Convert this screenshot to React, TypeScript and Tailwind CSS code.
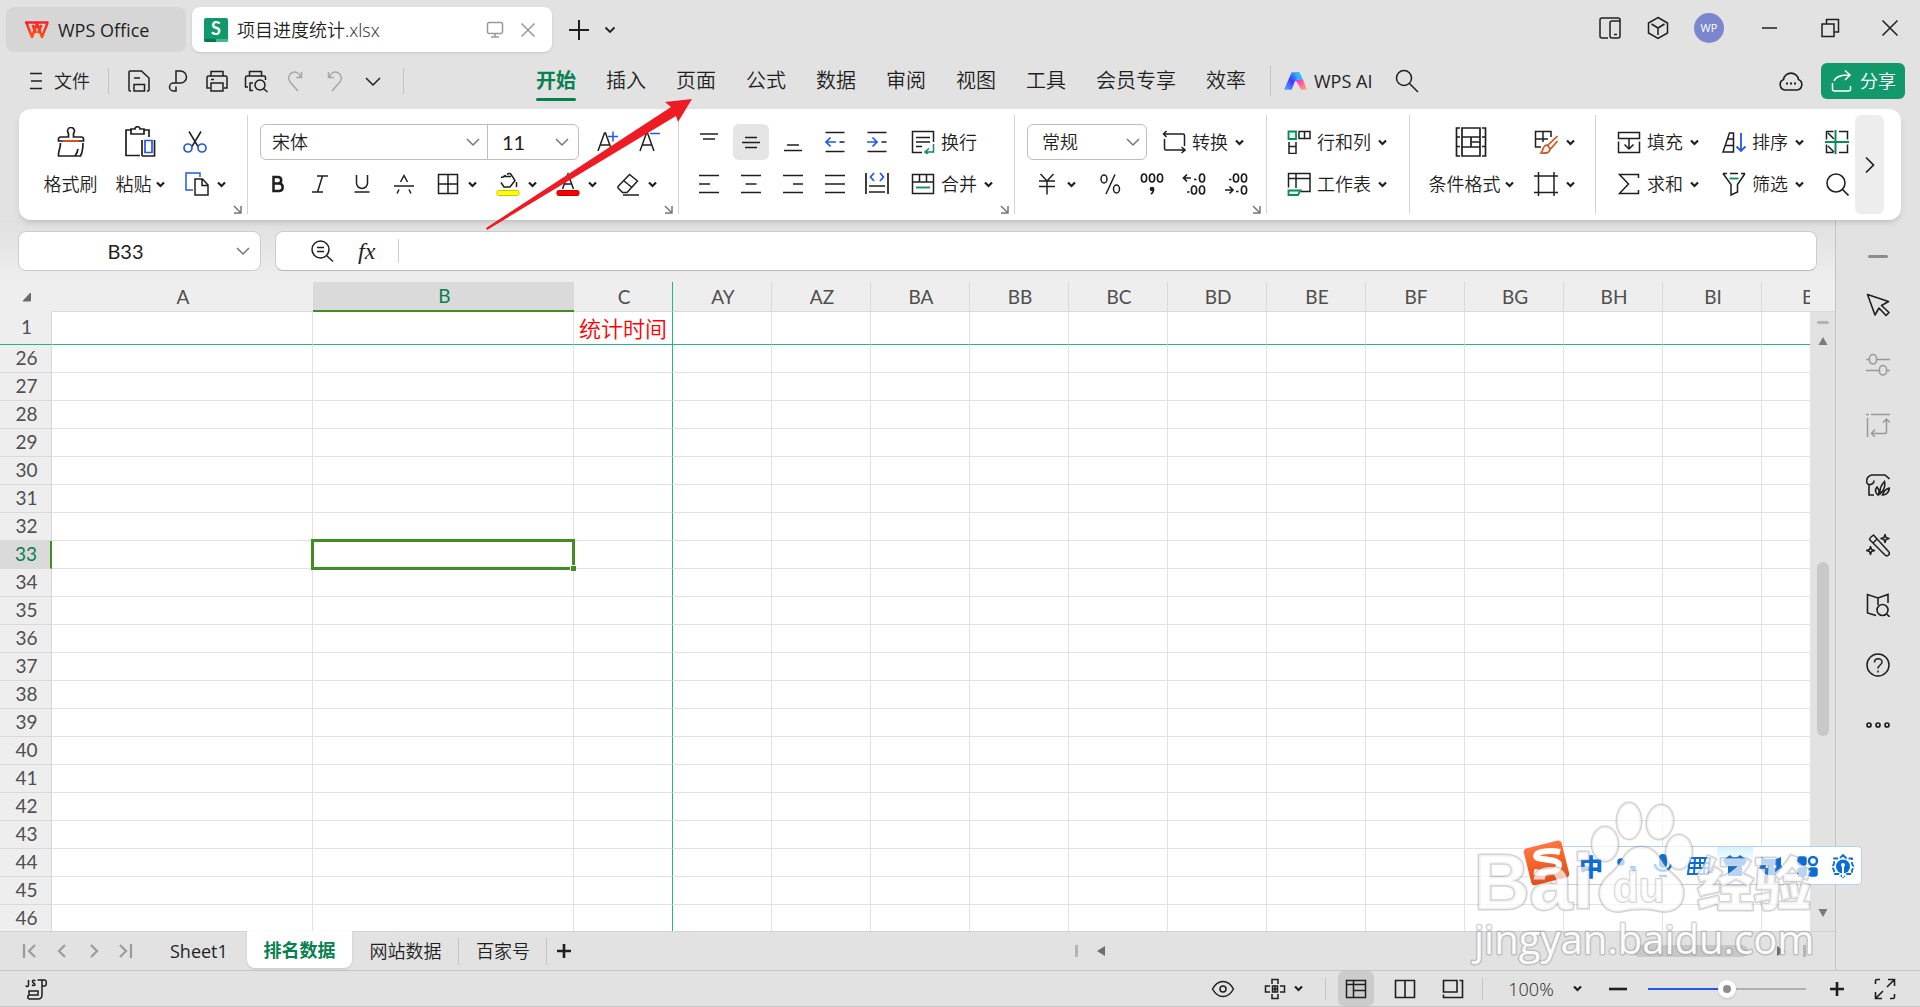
import { useState } from "react"
import type { ReactNode } from "react"

const menus = ["开始", "插入", "页面", "公式", "数据", "审阅", "视图", "工具", "会员专享", "效率"]
const farCols = ["AY", "AZ", "BA", "BB", "BC", "BD", "BE", "BF", "BG", "BH", "BI", "BJ"]
const rows = Array.from({ length: 21 }, (_, i) => i + 26)
const sheets = ["Sheet1", "排名数据", "网站数据", "百家号"]

const BLUE = "#2457e6"
const GREEN = "#0c8a5c"
const ORANGE = "#d0541b"

type IconProps = { children: ReactNode; w?: number; h?: number; sw?: number; className?: string }

const Icon = ({ children, w = 24, h = 24, sw = 1.5, className = "" }: IconProps) => (
  <svg width={w} height={h} viewBox={`0 0 ${w} ${h}`} fill="none" stroke="currentColor" strokeWidth={sw} className={`shrink-0 ${className}`} aria-hidden="true">
    {children}
  </svg>
)

const Chevron = () => (
  <Icon w={9} h={9} sw={2.2}><path d="M1 2.5l3.5 3.5L8 2.5" /></Icon>
)

const ThinChevron = ({ className = "" }: { className?: string }) => (
  <Icon w={14} h={10} sw={1.5} className={`text-[#777777] ${className}`}><path d="M1 2l6 6 6-6" /></Icon>
)

const IconBtn = ({ label, children, active }: { label: string; children: ReactNode; active?: boolean }) => (
  <button aria-label={label} className="flex h-9 w-[42px] shrink-0 items-center justify-center">
    <span className={`flex h-9 w-9 items-center justify-center rounded-md ${active ? "bg-[#e5e5e5]" : ""}`}>{children}</span>
  </button>
)

const SplitBtn = ({ label, children }: { label: string; children: ReactNode }) => (
  <button aria-label={label} className="flex h-9 w-[60px] shrink-0 items-center gap-2 pl-[11px]">
    {children}
    <Chevron />
  </button>
)

const TextBtn = ({ label, children, menu }: { label: string; children: ReactNode; menu?: boolean }) => (
  <button className="flex h-9 shrink-0 items-center gap-1.5 whitespace-nowrap pl-[11px] pr-2 text-lg">
    {children}
    <span className="flex items-center gap-[7px]">{label}{menu && <Chevron />}</span>
  </button>
)

const BigBtn = ({ label, children, menu, width }: { label: string; children: ReactNode; menu?: boolean; width: string }) => (
  <button className={`flex shrink-0 flex-col items-center gap-1.5 whitespace-nowrap text-lg ${width}`}>
    <span className="flex h-9 items-center">{children}</span>
    <span className="flex h-9 items-center gap-1">{label}{menu && <Chevron />}</span>
  </button>
)

const Group = ({ children, className = "", more }: { children: ReactNode; className?: string; more?: boolean }) => (
  <div className={`relative flex h-[99px] shrink-0 border-r border-[#d4d4d4] pt-[9px] ${className}`}>
    {children}
    {more && (
      <button aria-label="更多设置" className="absolute bottom-0 right-[5px] text-[#777777]">
        <Icon w={9} h={9}><path d="M1 1l7 7M8 1v7H1" /></Icon>
      </button>
    )}
  </div>
)

const Lines = ({ d, accent }: { d: string; accent?: string }) => (
  <Icon><path d={d} strokeWidth="1.7" />{accent && <path d={accent} stroke={BLUE} strokeWidth="1.7" />}</Icon>
)

const TitleBar = () => (
  <header className="flex h-14 items-center">
    <div className="flex h-full flex-1 items-start pl-1.5 pt-[7px]">
      <button className="flex h-[45px] w-[180px] shrink-0 items-center gap-2 rounded-lg bg-[#d6d6d6] pl-[18px] text-lg font-normal">
        <svg width="26" height="18" viewBox="0 0 26 18" fill="none" aria-hidden="true">
          <defs>
            <linearGradient id="wps" gradientUnits="userSpaceOnUse" x1="0" y1="0" x2="0" y2="18">
              <stop offset="0" stopColor="#f5202d" />
              <stop offset="1" stopColor="#ff5a12" />
            </linearGradient>
          </defs>
          <path d="M1 1.5H24.5M2.500 2l5.500 14 5-13.500 5 13.500 5.500-14M8.500 4l3.500 8M17.500 4l-3.500 8" stroke="url(#wps)" strokeWidth="2.600" strokeLinejoin="round" />
        </svg>
        WPS Office
      </button>
      <div className="ml-1.5 flex h-[45px] w-[360px] shrink-0 items-center rounded-lg bg-white pl-3 pr-4 text-lg shadow">
        <svg width="24" height="24" viewBox="0 0 24 24" aria-hidden="true">
          <rect width="24" height="24" rx="2" fill="#12996b" />
          <path d="M0 21h12v3H2a2 2 0 0 1-2-2z" fill="#04774c" />
          <path d="M12 21h12v1a2 2 0 0 1-2 2H12z" fill="#45b88b" />
          <text x="12" y="17" textAnchor="middle" fontFamily="Lato" fontWeight="700" fontSize="18" fill="#fff">S</text>
        </svg>
        <span className="ml-[9px] flex-1">项目进度统计.xlsx</span>
        <Icon w={18} h={18} className="text-[#999999]"><path d="M3 1.500h12a1.500 1.500 0 0 1 1.500 1.500v8a1.500 1.500 0 0 1-1.500 1.500H3A1.500 1.500 0 0 1 1.500 11V3A1.500 1.500 0 0 1 3 1.500zM9 12.500v3M5 16h8" /></Icon>
        <button aria-label="关闭标签" className="ml-4 text-[#999999]"><Icon w={16} h={16}><path d="M1.500 1.500l13 13M14.500 1.500l-13 13" /></Icon></button>
      </div>
      <button aria-label="新建" className="ml-4 flex h-[45px] items-center"><Icon w={22} h={22} sw={2}><path d="M1 11h20M11 1v20" /></Icon></button>
      <button aria-label="标签列表" className="ml-3.5 flex h-[45px] items-center"><Icon w={12} h={10} sw={1.8}><path d="M1.500 2.500L6 7l4.500-4.500" /></Icon></button>
    </div>
    <button aria-label="手机" className="ml-4"><Icon><path d="M10 22H4a2 2 0 0 1-2-2V4a2 2 0 0 1 2-2h16a2 2 0 0 1 2 2v16a2 2 0 0 1-2 2h-6a2 2 0 0 1-2-2V7a2 2 0 0 1 2-2h8M16 18.500h3" /></Icon></button>
    <button aria-label="应用" className="ml-6"><Icon><path d="M12 1.500l9.500 5.500v10L12 22.500 2.500 17V7zM5.500 8L12 12l6.500-4M12 12v7" /></Icon></button>
    <button className="ml-6 h-[30px] w-[30px] rounded-full bg-[#7b86cc] text-[11px] font-normal text-white">WP</button>
    <button aria-label="最小化" className="ml-9"><Icon w={20} h={20}><path d="M2 10h15" /></Icon></button>
    <button aria-label="还原" className="ml-[39px]"><Icon w={22} h={22}><path d="M3 7h12v12.500H3zM7.500 7V2.500H19.500v12.500H15" /></Icon></button>
    <button aria-label="关闭" className="ml-10 mr-[21px]"><Icon w={18} h={18}><path d="M1.500 1.500l15 15M16.500 1.500l-15 15" /></Icon></button>
  </header>
)

const MenuBar = () => (
  <nav className="flex h-[50px] items-center">
    <button className="ml-7 flex items-center gap-2.5 text-lg">
      <Icon w={16} h={20}><path d="M2 2.500h12M3 10h11M2 17.500h12" /></Icon>文件
    </button>
    <i className="ml-[18px] h-[26px] w-px bg-[#c4c4c4]" />
    <div className="flex items-center gap-[15px] pl-[18px]">
      <button aria-label="保存"><Icon><path d="M4 22H3a1 1 0 0 1-1-1V3a1 1 0 0 1 1-1h11.500l7.500 7v12a1 1 0 0 1-1 1h-1M7 22v-6.500h10.500V22zM7 9h6" /></Icon></button>
      <button aria-label="输出为PDF"><Icon><path d="M10 14V2h4.500a6 6 0 0 1 0 12H7.500a4 4 0 1 0 0 8H10v-4.500" /></Icon></button>
      <button aria-label="打印"><Icon><path d="M6 7V2.500h12V7M5 19H2V8.500A1.500 1.500 0 0 1 3.500 7h17A1.500 1.500 0 0 1 22 8.500V19h-3M6 14h12v8H6zM6 10.500h3" /></Icon></button>
      <button aria-label="打印预览"><Icon><path d="M5.500 7V2.500h12V7M4 18H1.500V8.500A1.500 1.500 0 0 1 3 7h17a1.500 1.500 0 0 1 1.500 1.500V11M9 21.500H6V14h3" /><circle cx="16" cy="16" r="5" /><path d="M19.500 19.500l4 3.500" /></Icon></button>
      <button aria-label="撤销" className="text-[#a6a6a6]"><Icon><path d="M15 22l-7.500-8.500a6 6 0 1 1 10-5.500M18.500 3v5.500H13" /></Icon></button>
      <button aria-label="恢复" className="text-[#a6a6a6]"><Icon><path d="M10 22l7.500-8.500a6 6 0 1 0-10-5.500M6.500 3v5.500H12" /></Icon></button>
      <button aria-label="更多"><Icon><path d="M5 9l7 7 7-7" /></Icon></button>
    </div>
    <i className="ml-[18px] h-[26px] w-px bg-[#c4c4c4]" />
    <div className="ml-[132px] flex items-center gap-[30px] whitespace-nowrap text-xl">
      {menus.map((m, i) => (
        <button key={m} className={i === 0 ? "relative font-bold text-[#08804f] after:absolute after:inset-x-0 after:-bottom-1.5 after:h-[3px] after:rounded after:bg-[#08804f]" : ""}>{m}</button>
      ))}
    </div>
    <i className="ml-6 h-[30px] w-px bg-[#c4c4c4]" />
    <button className="ml-[13px] flex items-center gap-1.5 whitespace-nowrap text-lg font-normal">
      <svg width="24" height="18" viewBox="0 0 25 18" aria-hidden="true">
        <defs>
          <linearGradient id="ai1" x1="0" y1="1" x2="1" y2="0"><stop offset="0" stopColor="#5fb0ff" /><stop offset=".5" stopColor="#3b3cff" /><stop offset="1" stopColor="#35d5ff" /></linearGradient>
          <linearGradient id="ai2" x1="0" y1="0" x2="1" y2="1"><stop offset="0" stopColor="#ff1de0" /><stop offset="1" stopColor="#ffb35c" /></linearGradient>
        </defs>
        <path d="M8 0h8l-2 7-3 3-3 8H0z" fill="url(#ai1)" />
        <path d="M12 8h8l4 10h-6z" fill="url(#ai2)" />
        <path d="M12 0h4l4 8h-6z" fill="#2fb4ff" />
      </svg>
      WPS AI
    </button>
    <button aria-label="搜索" className="ml-[22px]"><Icon w={26} h={26}><circle cx="10" cy="10" r="7.500" /><path d="M15.500 15.500l8.500 8.500" /></Icon></button>
    <button aria-label="云同步" className="ml-auto"><Icon w={26} h={24} sw={1.6}><path d="M7 21a5.500 5.500 0 0 1-1.500-10.500 7.600 7.600 0 0 1 15 0A5.500 5.500 0 0 1 19 21z" /><path d="M8 14.500h2M12 14.500h2M16 14.500h2" strokeWidth="2.200" /></Icon></button>
    <button className="ml-[17px] mr-[15px] flex h-9 w-[84px] items-center gap-2 rounded-md bg-[#12996b] pl-2.5 text-lg text-white">
      <Icon w={21} h={24}><path d="M1.500 14v6a2 2 0 0 0 2 2h14a2 2 0 0 0 2-2v-3M3 12c2-5 7-6 15-6M14 1.500L19 6l-5 5" /></Icon>
      分享
    </button>
  </nav>
)

const Ribbon = () => (
  <section className="relative z-10 mx-[19px] mt-[3px] flex h-[111px] items-center rounded-xl bg-white pl-4 pr-[17px] shadow-md">
    <div className="flex min-w-0 flex-1 overflow-hidden">
      <Group more className="pr-[13px]">
        <BigBtn label="格式刷" width="w-[71px]">
          <Icon w={30} h={30} sw={1.7}><path d="M12.500 10V7c0-1-1-2-1-3a3.500 3.500 0 0 1 7 0c0 1-1 2-1 3v3h8a2 2 0 0 1 2 2v2h-25v-2a2 2 0 0 1 2-2zM4.500 16c0 6-2.500 8-2 13h22c2-4 2.500-8 2.500-13M22 22c-.5 3-1.500 5-3 7" /><path d="M7 14h16" stroke={ORANGE} strokeWidth="2" /></Icon>
        </BigBtn>
        <BigBtn label="粘贴" menu width="w-[68px]">
          <Icon w={32} h={32} sw={1.7}><path d="M7 4H2v25.500h14M20 4h5v7M7 3h4c0-3 5-3 5 0h4v5H7z" /><path d="M18 30h12.500V14M18 14v16" /><path d="M21 14.500h7v12h-7z" stroke={BLUE} /></Icon>
        </BigBtn>
        <div className="flex flex-col gap-1.5">
          <IconBtn label="剪切"><Icon><path d="M6 1.500l9 15M18 1.500l-9 15" /><circle cx="5" cy="18" r="4" stroke={BLUE} strokeWidth="1.700" /><circle cx="19" cy="18" r="4" stroke={BLUE} strokeWidth="1.700" /></Icon></IconBtn>
          <SplitBtn label="复制"><Icon><path d="M8 18H1V1h14v4" stroke={BLUE} /><path d="M10 7h7.500l5.500 6v10H10zM17 7v6.500h6" /></Icon></SplitBtn>
        </div>
      </Group>

      <Group more className="flex-col gap-1.5 pl-[9px] pr-2">
        <div className="flex pl-[3px]">
          <div className="mr-[7px] flex h-9 items-center rounded-md border border-[#bebebe]">
            <label className="relative flex h-full w-[227px] items-center border-r border-[#bebebe]">
              <select aria-label="字体" className="h-full w-full appearance-none pl-[11px] text-lg outline-none"><option>宋体</option></select>
              <ThinChevron className="pointer-events-none absolute right-[7px]" />
            </label>
            <label className="relative flex h-full w-[90px] items-center">
              <select aria-label="字号" className="h-full w-full appearance-none pl-3.5 font-['Lato'] text-xl font-normal outline-none"><option>11</option></select>
              <ThinChevron className="pointer-events-none absolute right-[9px]" />
            </label>
          </div>
          <IconBtn label="增大字号"><Icon><path d="M3 21L9.500 3h1L17 21M5.500 15h9" /><path d="M13 6.500h10M18 1.500v10" stroke={BLUE} /></Icon></IconBtn>
          <IconBtn label="减小字号"><Icon><path d="M3 21L9.500 3h1L17 21M5.500 15h9" /><path d="M13 3.500h10" stroke={BLUE} /></Icon></IconBtn>
        </div>
        <div className="flex">
          <IconBtn label="加粗"><Icon sw={2.5}><path d="M7.500 5h5a3.300 3.300 0 0 1 0 6.500h-5zM7.500 11.500h6a3.800 3.800 0 0 1 0 7.500h-6z" /></Icon></IconBtn>
          <IconBtn label="倾斜"><Icon><path d="M9 4h11M4 20h11M14.500 4l-5 16" /></Icon></IconBtn>
          <IconBtn label="下划线"><Icon><path d="M6.500 3v8a5.500 5.500 0 0 0 11 0V3M4.500 20h15" /></Icon></IconBtn>
          <IconBtn label="删除线"><Icon><path d="M2 14h20M8.500 10L12 3.500l3.500 6.500M5 21.500l2-4M19 21.500l-2-4" /></Icon></IconBtn>
          <SplitBtn label="边框"><Icon><path d="M2.500 2.500h19v19h-19zM12 2.500v19M2.500 12h19" /></Icon></SplitBtn>
          <SplitBtn label="填充颜色"><Icon><path d="M5 5.500C7.500 5.500 8.500 4 9.500 3M7 4.500h8M11 2.500c2-2 4-1 5 1.500l3 4.500-5 6.500H8L5 10.500M20.500 10v5" /><rect x="1" y="18.500" width="22" height="5" rx="1.500" fill="#ffff00" stroke="#c8c800" strokeWidth="1" /></Icon></SplitBtn>
          <SplitBtn label="字体颜色"><Icon><path d="M6.500 17L12 2l5.500 15M8.500 12h7" /><rect x="1" y="18.500" width="22" height="5" rx="1.500" fill="#ff0000" stroke="#c00000" strokeWidth="1" /></Icon></SplitBtn>
          <SplitBtn label="清除"><Icon><path d="M2 14.500L13.500 2.500l8 6.500L11 20.500H6.500L2 16zM7.500 8.500l8.500 7M7 23h16" /></Icon></SplitBtn>
        </div>
      </Group>

      <Group more className="gap-0.5 pl-[9px] pr-[13px]">
        <div className="flex flex-col gap-1.5">
          <div className="flex">
            <IconBtn label="顶端对齐"><Lines d="M3 4h18M6 9h12" /></IconBtn>
            <IconBtn label="垂直居中" active><Lines d="M6 7.500h12M3 12.500h18M6 17.500h12" /></IconBtn>
            <IconBtn label="底端对齐"><Lines d="M6 15h12M3 20.500h18" /></IconBtn>
            <IconBtn label="减少缩进"><Lines d="M2.500 2.500h19M2.500 21.500h19M16.500 12h5" accent="M13 12H3M7.500 7.500L3 12l4.500 4.500" /></IconBtn>
            <IconBtn label="增加缩进"><Lines d="M2.500 2.500h19M2.500 21.500h19M16.500 12h5" accent="M2 12h10M7.500 7.500L12 12l-4.500 4.500" /></IconBtn>
          </div>
          <div className="flex">
            <IconBtn label="左对齐"><Lines d="M2 3.500h20M2 12h11M2 20.500h20" /></IconBtn>
            <IconBtn label="居中"><Lines d="M2 3.500h20M6.500 12h11M2 20.500h20" /></IconBtn>
            <IconBtn label="右对齐"><Lines d="M2 3.500h20M12 12h10M2 20.500h20" /></IconBtn>
            <IconBtn label="两端对齐"><Lines d="M2 3.500h20M2 12h20M2 20.500h20" /></IconBtn>
            <IconBtn label="分散对齐"><Lines d="M1 1v21M23 1v21M4 14h16M4 20h16" accent="M9 1L5.500 5 9 9M15 1l3.500 4L15 9" /></IconBtn>
          </div>
        </div>
        <div className="flex flex-col items-start gap-1.5">
          <TextBtn label="换行"><Icon><path d="M11 22.500H1.500v-21h21V12M5 7.500h14M5 12h14M5 16.500h6" /><path d="M22.500 14v8H14.500M18 18.500l-4 3.500 4 3" stroke={GREEN} /></Icon></TextBtn>
          <TextBtn label="合并" menu><Icon><path d="M1.500 2.500h21v19h-21zM1.500 10h21M8.500 2.500V10M15.500 2.500V10" /><path d="M5 15.500h14" stroke={GREEN} strokeWidth="1.800" /></Icon></TextBtn>
        </div>
      </Group>

      <Group more className="flex-col gap-1.5 px-[9px]">
        <div className="flex gap-1 pl-[3px]">
          <label className="relative flex h-9 w-[120px] items-center rounded-md border border-[#bebebe]">
            <select aria-label="数字格式" className="h-full w-full appearance-none pl-3.5 text-lg outline-none"><option>常规</option></select>
            <ThinChevron className="pointer-events-none absolute right-[6px]" />
          </label>
          <TextBtn label="转换" menu><Icon><path d="M4.500 1L1.500 4l3 3M2 4h19a1.500 1.500 0 0 1 1.500 1.500V16M19.500 17l3.500 3-3.500 3M22.500 20H4a1.500 1.500 0 0 1-1.500-1.500V9" /></Icon></TextBtn>
        </div>
        <div className="flex">
          <SplitBtn label="货币"><Icon><path d="M5.500 2l6.500 7 6.500-7M4 9h16M4 14.500h16M12 9v13.500" /></Icon></SplitBtn>
          <div className="ml-[5px] flex">
            <IconBtn label="百分比"><Icon><path d="M17 2.500L8 22" /><ellipse cx="6" cy="7" rx="3" ry="4" /><ellipse cx="18.500" cy="17" rx="3" ry="4" /></Icon></IconBtn>
            <IconBtn label="千位分隔"><Icon sw={1.7}><ellipse cx="4" cy="6" rx="2.600" ry="4" /><ellipse cx="12" cy="6" rx="2.600" ry="4" /><ellipse cx="20" cy="6" rx="2.600" ry="4" /><circle cx="12" cy="17" r="1.500" fill="currentColor" /><path d="M13.500 17c0 2-1 4-2.500 5" /></Icon></IconBtn>
            <IconBtn label="增加小数位"><Icon sw={1.7}><path d="M9 6H2M5 2.500L1.500 6 5 9.500M12 7.500h2.500M5 20h2.500" /><ellipse cx="20" cy="6" rx="2.600" ry="4" /><ellipse cx="12" cy="18" rx="2.600" ry="4" /><ellipse cx="20" cy="18" rx="2.600" ry="4" /></Icon></IconBtn>
            <IconBtn label="减少小数位"><Icon sw={1.7}><path d="M1 18h8M5.500 14.500L9 18l-3.500 3.500M12 19.500h2.500M5 7.500h2.500" /><ellipse cx="20" cy="18" rx="2.600" ry="4" /><ellipse cx="12" cy="6" rx="2.600" ry="4" /><ellipse cx="20" cy="6" rx="2.600" ry="4" /></Icon></IconBtn>
          </div>
        </div>
      </Group>

      <Group className="flex-col items-start gap-1.5 pl-[9px] pr-3.5">
        <TextBtn label="行和列" menu><Icon><path d="M12 1.500h11v7H12zM17.500 1.500v7M2 12v11.500h7V12M2 16.500h7" /><path d="M1.500 1.500h7.500v7.500H1.500z" stroke={GREEN} fill="#e3f5ec" strokeWidth="1.800" /></Icon></TextBtn>
        <TextBtn label="工作表" menu><Icon><path d="M14 19.500h9v-18H1.500v14M1.500 6.500H23M9 1.500V16" /><path d="M1.500 18.500h12l-2.500 4.500H1.500z" stroke={GREEN} fill="#e3f5ec" strokeWidth="1.800" /></Icon></TextBtn>
      </Group>

      <Group className="pl-[9px] pr-3">
        <BigBtn label="条件格式" menu width="w-[104px]">
          <Icon w={32} h={32} sw={1.7}><path d="M5 2H1.500v9H5M5 11H1.500v9.500H5M5 20.500H1.500v9.500H5M27 2h3.500v9H27M30.500 11v9.500H27M30.500 20.500v9.500H27M7 2h18v9H7zM7 11v10M7 21h18v9H7zM16 11v10M16 16h9M25 11v10" /></Icon>
        </BigBtn>
        <div className="flex flex-col gap-1.5">
          <SplitBtn label="单元格样式"><Icon><path d="M17 7V1.500H1.500v15.500H7M1.500 9H14M9 1.500V12" /><path d="M23.500 6L13 16M23.500 11l-7 8M13 15c-4 0-4 6-6 8 5 .5 9 0 9-4.500z" stroke={ORANGE} strokeWidth="1.700" /></Icon></SplitBtn>
          <SplitBtn label="边框样式"><Icon><path d="M4.500 0v24M20 0v24M0 4h24M0 20.500h24" /></Icon></SplitBtn>
        </div>
      </Group>

      <div className="flex h-[99px] shrink-0 gap-1 pl-2.5 pt-[9px]">
        <div className="flex flex-col gap-1.5">
          <TextBtn label="填充" menu><Icon><path d="M1.500 8.500v-6h21v6zM1.500 11.500v11h21v-11M12 9v9.500M7.500 14.500L12 19l4.500-4.500" /></Icon></TextBtn>
          <TextBtn label="求和" menu><Icon><path d="M21.500 6V2.500H2.500l9 9.500-9 9.500H21.500V18" /></Icon></TextBtn>
        </div>
        <div className="flex flex-col gap-1.5">
          <TextBtn label="排序" menu><Icon><path d="M1 22L7.500 3h4v19zM5.500 9h6M3.500 15.500h8" /><path d="M19 3v18M14.500 16.500L19 21l4.500-4.500" stroke={BLUE} strokeWidth="1.800" /></Icon></TextBtn>
          <TextBtn label="筛选" menu><Icon><path d="M1 1.500l8 11V23l6.500-3v-7.500L23 1.500M1 1.500h4M8 1.500h8M19 1.500h4" /><path d="M7.500 6.500h9" stroke={GREEN} strokeWidth="1.800" /></Icon></TextBtn>
        </div>
        <div className="flex flex-col gap-1.5">
          <IconBtn label="冻结窗格"><Icon><path d="M1.500 9.500v-8h7M1.500 14.500v8h7M14 1.500h8.500v8M22.500 14.500v8H14M3 3l6 6M3 16l6 6" /><path d="M10.500 0v24M0 12h24" stroke={GREEN} strokeWidth="2" /></Icon></IconBtn>
          <IconBtn label="查找"><Icon sw={1.6}><circle cx="11" cy="11" r="9" /><path d="M17.500 17.500l6 6" /></Icon></IconBtn>
        </div>
      </div>
    </div>
    <button aria-label="展开更多" className="flex h-[99px] w-[29px] items-center justify-center rounded-md bg-[#ededed]">
      <Icon w={10} h={18} sw={1.7}><path d="M1 1.500L8.500 9 1 16.500" /></Icon>
    </button>
  </section>
)

const FormulaBar = () => (
  <div className="flex h-[62px] items-start gap-3.5 bg-linear-to-b from-[#e0e0e0] to-[#eeeeee] pl-[18px] pr-[18px] pt-[11px]">
    <label className="relative flex h-10 w-[243px] shrink-0 items-center">
      <input aria-label="名称框" defaultValue="B33" className="h-full w-full rounded-lg border border-[#cccccc] bg-white pr-7 text-center font-['Lato'] text-xl font-normal outline-none" />
      <ThinChevron className="absolute right-[11px]" />
    </label>
    <div className="flex h-10 flex-1 items-center rounded-lg border border-b-[#b8b8b8] border-[#cccccc] bg-white pl-[34px]">
      <button aria-label="浏览公式"><Icon><circle cx="10.500" cy="10.500" r="8.500" /><path d="M7 8.500h7M7 12.500h7M17 17l6 5.500" /></Icon></button>
      <button className="ml-6 w-7 text-left font-['Liberation_Serif'] text-2xl italic">fx</button>
      <i className="ml-3 h-6 w-px bg-[#cccccc]" />
      <input aria-label="编辑栏" className="h-full flex-1 px-2 outline-none" />
    </div>
  </div>
)

const th = "border-b border-r border-[#d9d9d9] bg-[#eeeeee] font-normal text-[#4f4f4f]"
const td = "border-b border-r border-[#e2e2e2] p-0"

const Grid = () => (
  <div className="flex min-h-0 flex-1">
    <div className="min-w-0 flex-1 overflow-hidden bg-white">
      <table className="w-[1861px] table-fixed border-separate border-spacing-0 font-['Lato'] text-[19px] leading-6">
        <colgroup>
          <col className="w-[52px]" />
          <col className="w-[261px]" />
          <col className="w-[261px]" />
          <col className="w-[99px]" />
          {farCols.map((c) => <col key={c} className="w-[99px]" />)}
        </colgroup>
        <thead>
          <tr className="h-[30px]">
            <th className="bg-[#eeeeee] p-0">
              <svg width="10" height="10" viewBox="0 0 10 10" className="ml-[22px]" aria-hidden="true"><path d="M8.500 1v8H1z" fill="#6b6b6b" stroke="#6b6b6b" strokeLinejoin="round" /></svg>
            </th>
            <th className={`${th} border-r-transparent p-0 pl-0.5`}>A</th>
            <th className="border-b-2 border-[#428d23] bg-[#dadada] p-0 pl-0.5 font-normal text-[#08804f]">B</th>
            <th className={`${th} border-r-[#27b484] p-0 pl-0.5`}>C</th>
            {farCols.map((c) => <th key={c} className={`${th} p-0 pl-0.5`}>{c}</th>)}
          </tr>
        </thead>
        <tbody>
          <tr className="h-[33px]">
            <th className={`${th} border-b-[#27b484] p-0 pb-0.5 pl-0.5`}>1</th>
            <td className={`${td} border-b-[#27b484]`} />
            <td className={`${td} border-b-[#27b484]`} />
            <td className={`${td} whitespace-nowrap border-b-[#27b484] border-r-[#27b484] pb-0.5 text-center font-['Noto_Sans_CJK_SC'] text-[22px] text-[#ff0000]`}>统计时间</td>
            {farCols.map((c) => <td key={c} className={`${td} border-b-[#27b484]`} />)}
          </tr>
          {rows.map((r) => (
            <tr key={r} className="h-7">
              <th className={`p-0 pb-0.5 pl-0.5 ${r === 33 ? "border-b border-r-2 border-b-[#d9d9d9] border-r-[#428d23] bg-[#dadada] font-normal text-[#08804f]" : th}`}>{r}</th>
              <td className={td} />
              <td className={`${td} relative`}>
                {r === 33 && (
                  <div className="absolute -inset-0.5 z-[1] border-3 border-[#428d23]">
                    <i className="absolute -bottom-1 -right-1 h-[6px] w-[6px] border-l border-t border-white bg-[#428d23]" />
                  </div>
                )}
              </td>
              <td className={`${td} border-r-[#27b484]`} />
              {farCols.map((c) => <td key={c} className={td} />)}
            </tr>
          ))}
        </tbody>
      </table>
    </div>
    <div className="flex w-[25px] flex-col items-center bg-[#e2e2e2]">
      <div className="h-[30px] w-full border-b border-[#d9d9d9] bg-[#eeeeee]" />
      <i className="mt-[9px] h-[3px] w-3 rounded-full bg-[#b3b3b3]" />
      <svg width="10" height="8" viewBox="0 0 10 8" className="mt-[13px]" aria-hidden="true"><path d="M5 0l4.500 8h-9z" fill="#7a7a7a" /></svg>
      <i className="mt-[217px] h-[174px] w-3 rounded-full bg-[#c8c8c8]" />
      <svg width="10" height="8" viewBox="0 0 10 8" className="mb-3.5 mt-auto" aria-hidden="true"><path d="M5 8L.5 0h9z" fill="#7a7a7a" /></svg>
    </div>
  </div>
)

const SheetTabs = () => {
  const [sheet, setSheet] = useState("排名数据")

  return (
    <div className="flex h-[39px] shrink-0 items-center border-t border-[#d2d2d2]">
      <div className="flex w-[147px] shrink-0 gap-[19px] pl-[21px] text-[#9b9b9b]">
        <button aria-label="第一张"><Icon w={16} h={16} sw={2.2}><path d="M3 1v14M14 2L8 8l6 6" /></Icon></button>
        <button aria-label="上一张"><Icon w={12} h={16} sw={2.2}><path d="M9 2L3 8l6 6" /></Icon></button>
        <button aria-label="下一张"><Icon w={12} h={16} sw={2.2}><path d="M4 2l6 6-6 6" /></Icon></button>
        <button aria-label="最后一张"><Icon w={16} h={16} sw={2.2}><path d="M13 1v14M2 2l6 6-6 6" /></Icon></button>
      </div>
      {sheets.map((s) => (
        <button
          key={s}
          onClick={() => setSheet(s)}
          className={`relative h-full shrink-0 whitespace-nowrap text-lg ${s === "Sheet1" ? "w-[100px] pl-[23px] text-left font-normal" : s === "百家号" ? "w-[88px]" : s === "网站数据" ? "w-[107px]" : "w-[105px]"}`}
        >
          <span className={`flex items-center justify-center ${s === sheet ? "absolute inset-x-0 -top-px bottom-0.5 rounded-b-lg bg-white font-bold text-[#08804f] shadow-sm" : ""} ${s === "Sheet1" && s !== sheet ? "justify-start" : ""}`}>{s}</span>
          {(s === "网站数据" || s === "百家号") && <i className="absolute right-0 top-1.5 h-[27px] w-px bg-[#c6c6c6]" />}
        </button>
      ))}
      <button aria-label="新建工作表" className="ml-2"><Icon w={18} h={18} sw={2.6}><path d="M2 9h14M9 2v14" /></Icon></button>
      <div className="ml-auto flex w-[760px] items-center pr-[29px]">
        <i className="h-3 w-[3px] bg-[#b5b5b5]" />
        <svg width="8" height="10" viewBox="0 0 8 10" className="ml-[19px]" aria-hidden="true"><path d="M8 0v10L0 5z" fill="#6e6e6e" /></svg>
        <i className="ml-auto h-3 w-[115px] rounded-full bg-[#c8c8c8]" />
        <svg width="8" height="10" viewBox="0 0 8 10" className="ml-[29px]" aria-hidden="true"><path d="M0 0v10l8-5z" fill="#6e6e6e" /></svg>
        <i className="ml-[18px] h-3 w-[3px] bg-[#b5b5b5]" />
      </div>
    </div>
  )
}

const SideBar = () => (
  <aside className="flex w-[85px] shrink-0 flex-col items-center border-l border-[#c4c4c4] pt-[35px]">
    <button aria-label="收起" className="h-[3px] w-5 rounded-full bg-[#8c8c8c]" />
    <div className="flex flex-col gap-9 pt-[35px]">
      <button aria-label="选择"><Icon sw={1.6}><path d="M1.500 1.500l21 7-7 4 7.500 7-3 3-7-7.500-4 7z" strokeLinejoin="round" /></Icon></button>
      <button aria-label="属性" className="text-[#999999]"><Icon><path d="M0 6.500h3.500M10.500 6.500H24M0 17.500h13.500M20.500 17.500H24" /><rect x="3.500" y="1.500" width="7" height="9.500" rx="3.500" /><rect x="13.500" y="12.500" width="7" height="9.500" rx="3.500" /></Icon></button>
      <button aria-label="智能工具" className="text-[#999999]"><Icon><path d="M5 1.500h19M1.500 5v19M0 1.500h3M9 16.500l-3.500 4 3.500 3.500M5.500 20.500H19a1.500 1.500 0 0 0 1.500-1.500V6M17 9.500L20.500 6 24 9.500" /></Icon></button>
      <button aria-label="美化"><Icon sw={1.6}><path d="M23.500 6l-4.500-4H5.500C-.5 4-.5 11 3 11.500c3 .5 5-1.500 5-4M3 11.500V22h5M12 22c-4-3-2.500-6-1-8 2.500 3 3 5 1 8zM14 21c-.5-5 1-9 4.500-12.500 1 5-.5 9-4.500 12.500zM16.500 22c1-3.500 3.500-6 7-7-.5 4-3 6.500-7 7z" /></Icon></button>
      <button aria-label="魔法"><Icon><path d="M4.500 4.500l3-2.500L22.500 18.500a2 2 0 0 1-3.500 3.500L3.500 6.500zM7 10l3.500-3.500M19 1.500l1 3 3 1-3 1-1 3-1-3-3-1 3-1zM4.500 13.500l1 3 3 1-3 1-1 3-1-3-3-1 3-1z" strokeLinejoin="round" /></Icon></button>
      <button aria-label="查阅"><Icon sw={1.6}><path d="M10 22.500L1.500 20V1.500L12 5l10-3.500V10M12 5v7" /><circle cx="16.500" cy="17" r="5.500" /><path d="M20.500 21l3.500 3" /></Icon></button>
      <button aria-label="帮助"><Icon><circle cx="12" cy="12" r="11" /><path d="M8.500 9.500C8.500 4.500 16 4.500 16 9c0 3-4 3-4 6.500M12 17.500v2" /></Icon></button>
      <button aria-label="更多工具"><Icon sw={1.7}><circle cx="3" cy="12" r="2" /><circle cx="12" cy="12" r="2" /><circle cx="21" cy="12" r="2" /></Icon></button>
    </div>
  </aside>
)

const StatusBar = () => {
  const [zoom, setZoom] = useState(100)

  return (
    <footer className="flex h-[37px] shrink-0 items-center border-y border-[#c4c4c4]">
      <button aria-label="JS宏" className="ml-[25px]"><Icon w={22} h={22}><path d="M3.500 2v5c0 2-2.500 2-2.500.5M10.500 3c-3-2-4 1-2 2s2 3.500-1.500 2M12.500 2h7c2.500 0 2.500 6 0 6h-2.500v9c0 3-1 4-4 4H5c-3 0-3-4 0-4h8v-4H4v4M17 2.500V12" /></Icon></button>
      <button aria-label="护眼" className="ml-auto"><Icon><path d="M1.500 12C7 2 17 2 22.500 12 17 22 7 22 1.500 12z" /><circle cx="12" cy="12" r="3" /></Icon></button>
      <button aria-label="阅读模式" className="ml-7 flex items-center gap-[7px]"><Icon><path d="M9 7V2.500h6V7M9 17v4.500h6V17M7 9H2.500v6H7M17 9h4.500v6H17M9.500 9h5v6h-5zM12 9v6M9.500 12h5" /></Icon><Chevron /></button>
      <i className="ml-[22px] h-[22px] w-px bg-[#c4c4c4]" />
      <button aria-label="普通视图" className="ml-3 flex h-[35px] w-9 items-center justify-center rounded-md bg-[#cccccc]"><Icon w={22} h={20}><path d="M1.500 1.500h19v17h-19zM1.500 5.500h19M8.500 11.500h12M8.500 1.500v17" /></Icon></button>
      <button aria-label="分页预览" className="ml-5"><Icon w={22} h={20} sw={1.6}><path d="M1.500 1.500h19v17h-19zM11 1.500v17" /></Icon></button>
      <button aria-label="页面布局" className="ml-[26px]"><Icon w={22} h={20} sw={1.6}><path d="M1.500 1.500h13.500v11.500H1.500zM17.500 1.500h3v17H1.500v-3" /></Icon></button>
      <i className="ml-[18px] h-[22px] w-px bg-[#c4c4c4]" />
      <button className="ml-[23px] flex items-center gap-[17px] text-lg"><span className="w-[50px]">{zoom}%</span><Chevron /></button>
      <button aria-label="缩小" className="ml-[27px]"><Icon w={18} h={18} sw={2.6}><path d="M0 9h18" /></Icon></button>
      <input
        type="range"
        aria-label="缩放"
        min={0}
        max={200}
        value={zoom}
        onChange={(e) => setZoom(Number(e.target.value))}
        className="ml-[21px] h-0.5 w-[158px] appearance-none bg-linear-to-r from-[#2457e6] from-50% to-[#b0b0b0] to-50% [&::-webkit-slider-thumb]:h-[18px] [&::-webkit-slider-thumb]:w-[18px] [&::-webkit-slider-thumb]:appearance-none [&::-webkit-slider-thumb]:rounded-full [&::-webkit-slider-thumb]:border-[5px] [&::-webkit-slider-thumb]:border-white [&::-webkit-slider-thumb]:bg-[#8c8c8c] [&::-webkit-slider-thumb]:shadow"
      />
      <button aria-label="放大" className="ml-[22px]"><Icon w={18} h={18} sw={2.6}><path d="M2 9h14M9 2v14" /></Icon></button>
      <button aria-label="全屏" className="ml-7 mr-6"><Icon w={22} h={22} sw={1.6}><path d="M1.500 6V3a1.500 1.500 0 0 1 1.500-1.500h3M20.500 16v3a1.500 1.500 0 0 1-1.500 1.500h-3M14 1.500h6.500V8M20.500 1.500L13 9M8 20.500H1.500V14M1.500 20.500L9 13" /></Icon></button>
    </footer>
  )
}

const InputMethodBar = () => (
  <div className="absolute bottom-[122px] right-[58px] z-20 flex h-[39px] items-center rounded border border-[#b9cfec] bg-white pl-[22px] text-[#0a6cd6]">
    <svg width="50" height="50" viewBox="0 0 50 50" className="absolute -left-[30px] -top-2" aria-hidden="true">
      <defs>
        <linearGradient id="sg" x1="0" y1="0" x2="0" y2="1"><stop offset="0" stopColor="#ff7640" /><stop offset="1" stopColor="#ea4a10" /></linearGradient>
      </defs>
      <rect x="6" y="5" width="39" height="38" rx="4" transform="rotate(-14 25 24)" fill="url(#sg)" />
      <path d="M39 13c-9-2-24-1-24 4s23 2 23 9-12 9-25 7" fill="none" stroke="#fff" strokeWidth="6" />
    </svg>
    <button className="w-9 font-['Noto_Sans_CJK_SC'] text-2xl font-black leading-6">中</button>
    <button aria-label="标点" className="flex w-9 justify-center"><Icon><circle cx="6" cy="8" r="3" fill="currentColor" /><path d="M15 12h6c0 5-2 8-5 9 1-2 2-3 2-5-2 0-4-3-3-4z" fill="currentColor" stroke="none" /></Icon></button>
    <button aria-label="语音" className="flex w-9 justify-center"><Icon sw={2.4}><rect x="8" y="0" width="8" height="14" rx="4" fill="currentColor" stroke="none" /><path d="M4 10c0 9 16 9 16 0M8 22h8" /></Icon></button>
    <button aria-label="键盘" className="flex w-9 justify-center"><Icon sw={2}><path d="M3 4h20l-2 16H1zM3 9h19M2 14h19M8 4L7 20M13 4v11M18 4l-1 16" /></Icon></button>
    <button aria-label="皮肤" className="flex h-full w-9 items-center justify-center bg-linear-to-b from-[#d5f3fb] to-white to-50%"><Icon><path d="M7 1c2 3 8 3 10 0l7 5-3 6-2-1v11H5V11l-2 1-3-6z" fill="currentColor" stroke="none" /></Icon></button>
    <button aria-label="表情" className="flex w-9 justify-center"><Icon><path d="M2 3l5 2h10l5-2v8l2 3-3 2c-2 7-16 7-18 0l-3-2 2-3z" fill="currentColor" stroke="none" /><path d="M8 11v3M16 11v3" stroke="#fff" strokeWidth="2.500" /></Icon></button>
    <button aria-label="工具箱" className="flex w-9 justify-center"><Icon><rect x="3" y="3" width="8" height="8" rx="2" fill="currentColor" /><rect x="14" y="3" width="8" height="8" rx="4" strokeWidth="2.500" /><rect x="3" y="14" width="8" height="8" rx="2" fill="currentColor" /><rect x="14" y="14" width="8" height="8" rx="2" fill="currentColor" /></Icon></button>
    <button aria-label="徽章" className="flex w-9 justify-center"><Icon><path d="M12 1l3.500 3.500H21V10l2 3-2 3v4h-5l-4 3-4-3H3v-4l-2-3 2-3V4.500h5.500z" strokeDasharray="5 2" strokeWidth="1.800" /><circle cx="12" cy="12.500" r="7" fill="currentColor" stroke="none" /><path d="M12 12v11" stroke="#fff" strokeWidth="2" /><circle cx="12" cy="11" r="2" fill="#fff" stroke="none" /></Icon></button>
  </div>
)

const Watermark = () => (
  <svg width="350" height="170" viewBox="0 0 350 170" className="pointer-events-none absolute bottom-[37px] right-[100px] z-30 [&_*]:[paint-order:stroke]" aria-hidden="true">
    <g fill="#ffffff" fillOpacity="0.7" stroke="#808080" strokeOpacity="0.35" strokeWidth="3" strokeLinejoin="round">
      <text x="4" y="109" fontFamily="Liberation Sans" fontWeight="700" fontSize="77">Bai</text>
      <ellipse cx="135" cy="44" rx="13" ry="17" />
      <ellipse cx="159" cy="21" rx="12" ry="18" />
      <ellipse cx="190" cy="22" rx="13" ry="17" transform="rotate(10 190 22)" />
      <ellipse cx="209" cy="52" rx="13" ry="17" />
      <path d="M171 47c-16 0-18 16-28 25-10 8-15 16-13 25 3 12 12 16 22 14 12-3 26-3 38 0 11 2 21-3 23-14 2-10-3-17-13-25-9-8-12-25-29-25z" />
      <text x="227" y="105" fontFamily="Noto Sans CJK SC" fontWeight="900" fontSize="57">经验</text>
      <text x="143" y="102" fontFamily="Liberation Sans" fontWeight="700" fontSize="42" strokeWidth="2">du</text>
      <text x="4" y="154" fontFamily="Open Sans" fontWeight="400" fontSize="40" fillOpacity="0.95">jingyan.baidu.com</text>
    </g>
  </svg>
)

const App = () => {
  return (
    <div className="relative flex h-screen flex-col overflow-hidden bg-[#e2e2e2] font-['Open_Sans','Noto_Sans_CJK_SC',sans-serif] font-[350] text-[#1f1f1f]">
      <TitleBar />
      <MenuBar />
      <Ribbon />
      <div className="flex min-h-0 flex-1">
        <main className="flex min-w-0 flex-1 flex-col">
          <FormulaBar />
          <Grid />
          <SheetTabs />
        </main>
        <SideBar />
      </div>
      <StatusBar />
      <InputMethodBar />
      <Watermark />
      {/* red pointer to the page menu */}
      <svg width="212" height="134" viewBox="0 0 212 134" className="pointer-events-none absolute left-[484px] top-[97px] z-20" aria-hidden="true">
        <path d="M208 2l-27 3 6 5L2 131l1 2L192 19l2 6z" fill="#ed1c24" />
      </svg>
    </div>
  )
}

export default App
